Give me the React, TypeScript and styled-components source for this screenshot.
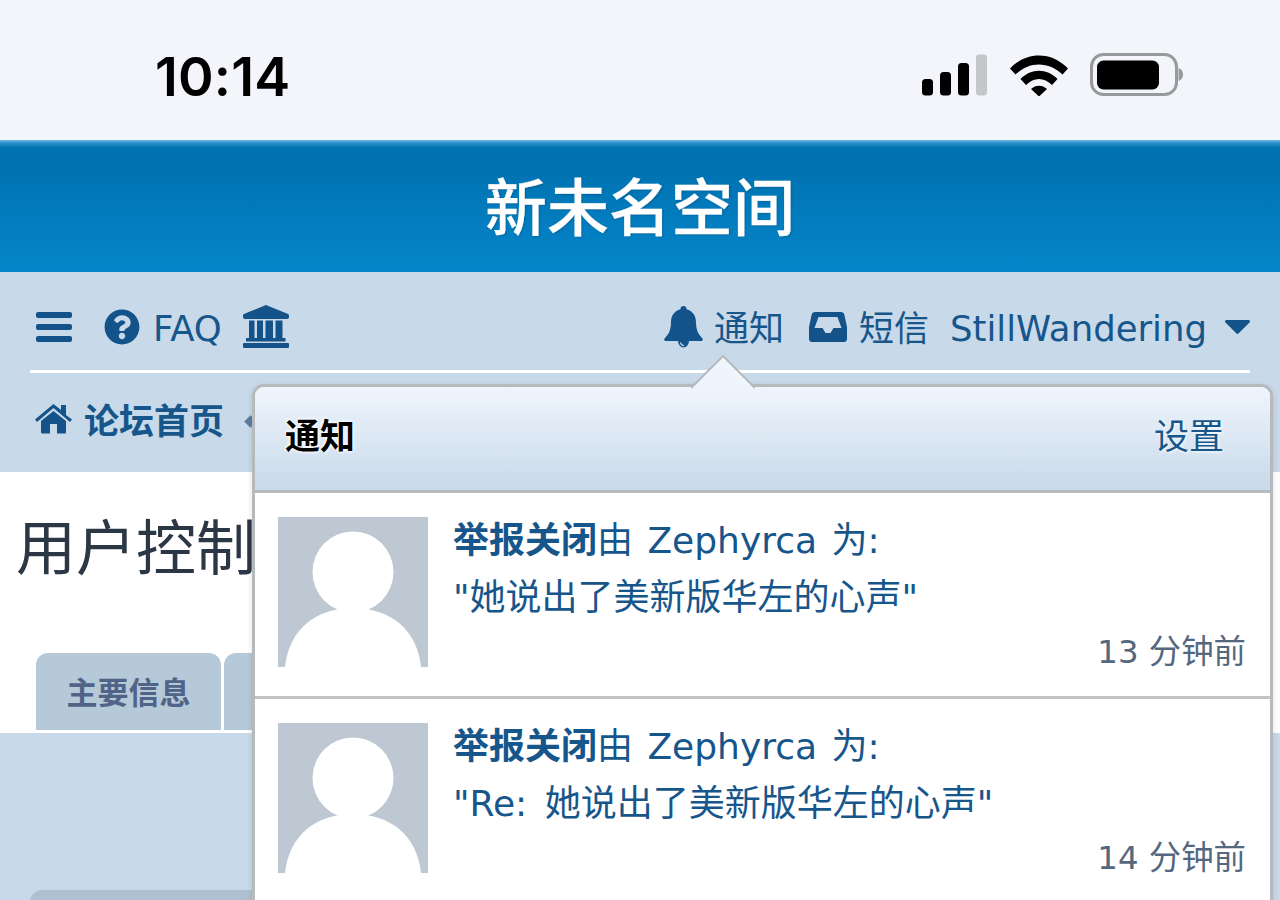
import React from "react";
import styled, { createGlobalStyle } from "styled-components";
import { FaQuestionCircle } from "react-icons/fa";

const Global = createGlobalStyle`
  html, body { margin: 0; padding: 0; height: 900px; overflow: hidden; background: #fff; }
  * { box-sizing: border-box; }
  #root { height: 900px; overflow: hidden; }
`;
const FONT = `"DejaVu Sans", "Noto Sans CJK SC", sans-serif`;
const Page = styled.div`position: relative; height: 900px; overflow: hidden; font-family: ${FONT}; color: #17568b;`;
const StatusBar = styled.div`height: 140px; background: #f3f5fa; display: flex; align-items: center; justify-content: space-between; padding: 12px 96px 0 155px;`;
const Time = styled.div`font-family: Inter, sans-serif; font-size: 54px; font-weight: 600; color: #000; letter-spacing: 0.2px; line-height: 1; margin-top: 2px;`;
const StatusIcons = styled.div`display: flex; align-items: center; gap: 22px; margin-top: -2px;`;
const Banner = styled.header`height: 132px; background: linear-gradient(#6fbde4 0, #2a90c8 3px, #0072ae 8px, #0073b2 30px, #0586ca 100%); display: flex; align-items: center; justify-content: center; padding-bottom: 5px;`;
const BannerTitle = styled.h1`margin: 0; color: #fff; font: 500 62px "Noto Sans CJK SC", sans-serif; -webkit-text-stroke: 0.35px #fff; text-shadow: 1px 1px 2px rgba(0,40,80,.3);`;
const Nav = styled.nav`height: 200px; background: #c8d9e9; padding: 0 30px;`;
const TopRow = styled.div`height: 101px; border-bottom: 3px solid #fff; display: flex; align-items: center; justify-content: space-between; padding: 16px 0 0 6px;`;
const Group = styled.div`display: flex; align-items: center;`;
const NavItem = styled.span<{ $ml?: number; $gap?: number }>`display: inline-flex; align-items: center; gap: ${p => p.$gap ?? 12}px; font-size: 35px; line-height: 40px; margin-left: ${p => p.$ml ?? 0}px; white-space: nowrap;`;
const Latin = styled.span`font-size: 35.5px;`;
const Glyph = styled.svg`display: block; flex: none; fill: #14538a; margin-bottom: 5px;`;
const HelpIcon = styled(FaQuestionCircle)`display: block; flex: none; margin-bottom: 5px; color: #14538a;`;
const CrumbGlyph = styled(Glyph)`margin-bottom: 0;`;
const CrumbRow = styled.div`height: 99px; display: flex; align-items: center; padding: 0 0 8px 5px; gap: 13px; font-size: 35px; font-weight: 700;`;
const Crumb = styled.span`display: inline-flex; align-items: center; gap: 12px;`;
const CrumbArrow = styled.span`width: 9px; height: 9px; margin-left: 9px; margin-top: 6px; background: #5b7ea1; transform: rotate(45deg);`;
const Content = styled.main`height: 261px; background: #fff; display: flex; flex-direction: column; justify-content: space-between; padding-bottom: 3px;`;
const PageTitle = styled.h2`margin: 36px 0 0 16px; font: 400 60px/72px "Noto Sans CJK SC", sans-serif; color: #2c3745; white-space: nowrap;`;
const Tabs = styled.div`display: flex; gap: 3px; padding-left: 36px;`;
const Tab = styled.div`height: 77px; width: 185px; background: #b6c9d8; border-radius: 12px 12px 0 0; display: flex; align-items: center; justify-content: center; padding-bottom: 2px; color: #4f6487; font: 700 31px "Noto Sans CJK SC", sans-serif;`;
const Lower = styled.section`height: 167px; background: #c8d9e9; padding: 157px 0 0 30px;`;
const LowerBlock = styled.div`height: 12px; width: 300px; background: #afc1d0; border-radius: 12px 0 0 0;`;
const Popup = styled.div`position: absolute; left: 252px; top: 384px; width: 1021px; height: 560px; border: 3px solid #b7babd; border-radius: 12px; background: #fff; box-shadow: 0 2px 6px rgba(0,0,0,.12);`;
const Arrow = styled.svg`position: absolute; left: 436px; top: -32px; display: block;`;
const PopHead = styled.div`height: 106px; border-radius: 9px 9px 0 0; border-bottom: 3px solid #b7babd; background: linear-gradient(#eff5fd, #c8d9e9); display: flex; align-items: center; justify-content: space-between; padding: 0 46px 10px 30px;`;
const PopTitle = styled.div`font-size: 35px; font-weight: 700; color: #000; text-shadow: 1px 1px 3px #fff, -1px -1px 3px #fff;`;
const PopLink = styled.div`font-size: 35px; color: #17568b; text-shadow: 1px 1px 3px #fff;`;
const Item = styled.div`height: 206px; border-bottom: 3px solid #c0c2c4; padding: 24px 24px 0 23px; display: flex; gap: 25px;`;
const Avatar = styled.svg`width: 150px; height: 150px; flex: none; display: block;`;
const ItemBody = styled.div`flex: 1; font-size: 36px; line-height: 56px; color: #17568b; margin-top: -4px; word-spacing: 3px;`;
const Line = styled.div<{ $mt?: number; $ws?: number }>`white-space: nowrap; margin-top: ${p => p.$mt ?? 0}px; word-spacing: ${p => p.$ws ?? 3}px;`;
const Strong = styled.b`font-weight: 700;`;
const When = styled.div`text-align: right; color: #55677e; font-size: 32.400px; line-height: 56px; margin-top: -2px; word-spacing: 0;`;

const Person = () => (
  <Avatar viewBox="0 0 150 150">
    <rect width="150" height="150" fill="#bec8d2" />
    <circle cx="75" cy="55" r="40.500" fill="#fff" />
    <path d="M7 150C11 112 38 91 75 91s64 21 68 59z" fill="#fff" />
  </Avatar>
);

const Signal = () => (
  <svg width="66" height="42" viewBox="0 0 66 42">
    <rect x="0" y="25" width="11" height="16.500" rx="3.500" />
    <rect x="18" y="18" width="11" height="23.500" rx="3.500" />
    <rect x="36" y="9" width="11" height="32.500" rx="3.500" />
    <rect x="54" y="0.500" width="11" height="41" rx="3" fill="#c5c6c8" />
  </svg>
);
const Wifi = () => (
  <svg width="58" height="42" viewBox="0 0 58 42">
    <path d="M0 14.500C16-3 42-3 58 14.500l-5.500 6C39 7 19 7 5.500 20.500z" />
    <path d="M10.500 25C21 14 37 14 47.500 25l-5.500 6C34 23 24 23 16 31z" />
    <path d="M21 35c4.500-4.500 11.500-4.500 16 0l-8 7.500z" />
  </svg>
);
const Battery = () => (
  <svg width="94" height="44" viewBox="0 0 94 44">
    <rect x="1.500" y="1.500" width="85" height="40" rx="12" fill="none" stroke="#98999b" strokeWidth="3" />
    <rect x="7" y="7.500" width="62" height="29" rx="6.500" fill="#000" />
    <path d="M88.500 15c3 1 4.500 3.500 4.500 6.500s-1.500 5.500-4.500 6.500z" fill="#98999b" />
  </svg>
);
const Bars = () => (
  <Glyph width="36" height="30" viewBox="0 0 36 30">
    <rect y="0" width="36" height="6" rx="2" />
    <rect y="12" width="36" height="6" rx="2" />
    <rect y="24" width="36" height="6" rx="2" />
  </Glyph>
);
const University = () => (
  <Glyph width="46" height="43" viewBox="0 0 46 43">
    <path d="M23 0 45 9c.7.300 1 .8 1 1.500V12c0 1-.7 2-2 2H2c-1.300 0-2-1-2-2v-1.500C0 9.800.3 9.300 1 9z" />
    <path fillRule="evenodd" d="M6 15.500h33.500V33H6zM11.500 15.500V33h2.500V15.500zM20 15.500V33h2.500V15.500zM30 15.500V33h2.500V15.500z" />
    <rect x="3" y="33" width="39.500" height="3.500" />
    <rect x="0" y="38" width="46" height="5" rx="1" />
  </Glyph>
);
const Bell = () => (
  <Glyph width="39" height="42" viewBox="0 0 39 42">
    <circle cx="19.500" cy="3" r="3" />
    <path d="M19.500 3c8 0 12.500 6 12.500 13 0 10 3.500 13 6.500 16.500.6.800.3 2.500-1.500 2.500H2c-1.800 0-2.100-1.700-1.500-2.500C3.500 29 7 26 7 16 7 9 11.500 3 19.500 3z" />
    <path d="M14 35h11a5.500 6.500 0 0 1-11 0z" />
    <path d="M16.500 36.500c.2 1.800 1.500 3 3.500 3.200" fill="none" stroke="#c8d9e9" strokeWidth="1.200" />
  </Glyph>
);
const Inbox = () => (
  <Glyph width="38" height="30" viewBox="0 0 38 30">
    <path fillRule="evenodd" d="M6 0h26c1.500 0 2.700.8 3.200 2L38 15v12c0 1.700-1.300 3-3 3H3c-1.700 0-3-1.300-3-3V15L2.800 2C3.300.8 4.500 0 6 0zM9.500 5 5.500 16h8l3 5h5l3-5h8L28.500 5z" />
  </Glyph>
);
const Caret = () => (
  <Glyph width="25" height="14" viewBox="0 0 25 14">
    <path d="M1.500 0h22c1.300 0 2 1.500 1 2.500L13.500 13.500c-.6.600-1.400.600-2 0L.5 2.500C-.500 1.500.2 0 1.500 0z" />
  </Glyph>
);
const Home = () => (
  <CrumbGlyph width="37" height="30" viewBox="0 0 37 30">
    <path d="M18.500 0 26 6V1h5v10l6 4.500-2 2.500L18.500 4 2 18l-2-2.500z" />
    <path d="M18.500 7 31 17v11.500a1 1 0 0 1-1 1h-8V20h-7v9.500H7a1 1 0 0 1-1-1V17z" />
  </CrumbGlyph>
);

const App = () => (
  <Page>
    <Global />
    <StatusBar>
      <Time>10:14</Time>
      <StatusIcons>
        <Signal />
        <Wifi />
        <Battery />
      </StatusIcons>
    </StatusBar>
    <Banner><BannerTitle>新未名空间</BannerTitle></Banner>
    <Nav>
      <TopRow>
        <Group>
          <NavItem><Bars /></NavItem>
          <NavItem $ml={32} $gap={13}><HelpIcon size={36} /><Latin>FAQ</Latin></NavItem>
          <NavItem $ml={21}><University /></NavItem>
        </Group>
        <Group>
          <NavItem $gap={11}><Bell />通知</NavItem>
          <NavItem $ml={25}><Inbox />短信</NavItem>
          <NavItem $ml={21}><Latin>StillWandering</Latin></NavItem>
          <NavItem $ml={18}><Caret /></NavItem>
        </Group>
      </TopRow>
      <CrumbRow>
        <Crumb><Home />论坛首页</Crumb>
        <CrumbArrow />
      </CrumbRow>
    </Nav>
    <Content>
      <PageTitle>用户控制面板</PageTitle>
      <Tabs>
        <Tab>主要信息</Tab>
        <Tab>帖子</Tab>
      </Tabs>
    </Content>
    <Lower><LowerBlock /></Lower>
    <Popup>
      <Arrow width="64" height="34" viewBox="0 0 64 34">
        <path d="M1 33 32 1l31 32z" fill="#eff5fd" />
        <path d="M0 33 32 1l32 32" fill="none" stroke="#b7babd" strokeWidth="2" />
      </Arrow>
      <PopHead>
        <PopTitle>通知</PopTitle>
        <PopLink>设置</PopLink>
      </PopHead>
      <Item>
        <Person />
        <ItemBody>
          <Line><Strong>举报关闭</Strong>由 Zephyrca 为:</Line>
          <Line $mt={1}>"她说出了美新版华左的心声"</Line>
          <When>13 分钟前</When>
        </ItemBody>
      </Item>
      <Item>
        <Person />
        <ItemBody>
          <Line><Strong>举报关闭</Strong>由 Zephyrca 为:</Line>
          <Line $mt={1} $ws={6}>"Re: 她说出了美新版华左的心声"</Line>
          <When>14 分钟前</When>
        </ItemBody>
      </Item>
    </Popup>
  </Page>
);
export default App;
